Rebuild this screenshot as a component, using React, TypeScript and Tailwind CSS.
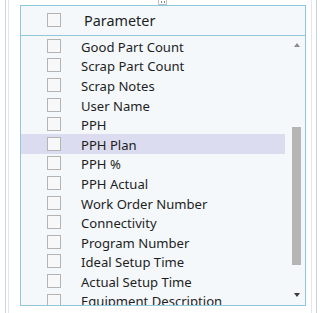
import React from "react";

const items = [
  "Good Part Count",
  "Scrap Part Count",
  "Scrap Notes",
  "User Name",
  "PPH",
  "PPH Plan",
  "PPH %",
  "PPH Actual",
  "Work Order Number",
  "Connectivity",
  "Program Number",
  "Ideal Setup Time",
  "Actual Setup Time",
  "Equipment Description",
];

function Box() {
  return <div className="w-[14px] h-[14px] border border-[#b4b4b4] bg-[#f8f8f8] shrink-0" />;
}

export default function App() {
  return (
    <div
      className="relative w-[320px] h-[313px] bg-white overflow-hidden flex"
      style={{ fontFamily: '"Noto Sans", "Open Sans", sans-serif' }}
    >
      <div className="absolute left-[158px] top-0 w-[9px] h-[5px] border border-t-0 border-[#b8c4cc] bg-white flex items-center justify-center gap-[2px]">
        <div className="w-[1px] h-[2px] bg-[#7a8a96]" />
        <div className="w-[1px] h-[2px] bg-[#7a8a96]" />
      </div>
      <div className="ml-[5px] w-[312px] h-full border-l border-r border-[#c9d4dc] flex">
        <div className="ml-[2px] w-[304px] h-full border-l border-r border-[#e2e6ee] flex">
          <div className="ml-[11px] mt-[5px] w-[286px] h-[301px] border border-[#8ec8da] bg-[#f4f8fb] flex flex-col overflow-hidden">
            <div className="h-[30px] shrink-0 border-b border-[#8ec8da] flex items-center">
              <div className="ml-[26px] mt-[-1px]">
                <Box />
              </div>
              <span className="ml-[23px] text-[14.4px] text-[#1e1e1e] leading-none mt-[2px]">Parameter</span>
            </div>
            <div className="relative flex-1 overflow-hidden">
              <div className="flex flex-col w-[264px]">
                {items.map((t, i) => (
                  <div
                    key={t}
                    className={`h-[19.6px] shrink-0 flex items-center ${i === 5 ? "bg-[#dcdcf0]" : ""}`}
                  >
                    <div className="ml-[26px]">
                      <Box />
                    </div>
                    <span className="ml-[20px] mt-[3px] text-[13.1px] text-[#1e1e1e] leading-none whitespace-nowrap">{t}</span>
                  </div>
                ))}
              </div>
              <div className="absolute right-[2px] top-0 bottom-0 w-[13px] flex flex-col items-center">
                <div className="mt-[7px] w-0 h-0 border-l-[3.5px] border-r-[3.5px] border-b-[4px] border-l-transparent border-r-transparent border-b-[#8a8a8a]" />
                <div className="mt-[80px] w-[9px] h-[138px] bg-[#b5b5b5]" />
                <div className="mt-[28px] w-0 h-0 border-l-[3.5px] border-r-[3.5px] border-t-[4px] border-l-transparent border-r-transparent border-t-[#3c3c3c]" />
              </div>
            </div>
          </div>
        </div>
      </div>
    </div>
  );
}
